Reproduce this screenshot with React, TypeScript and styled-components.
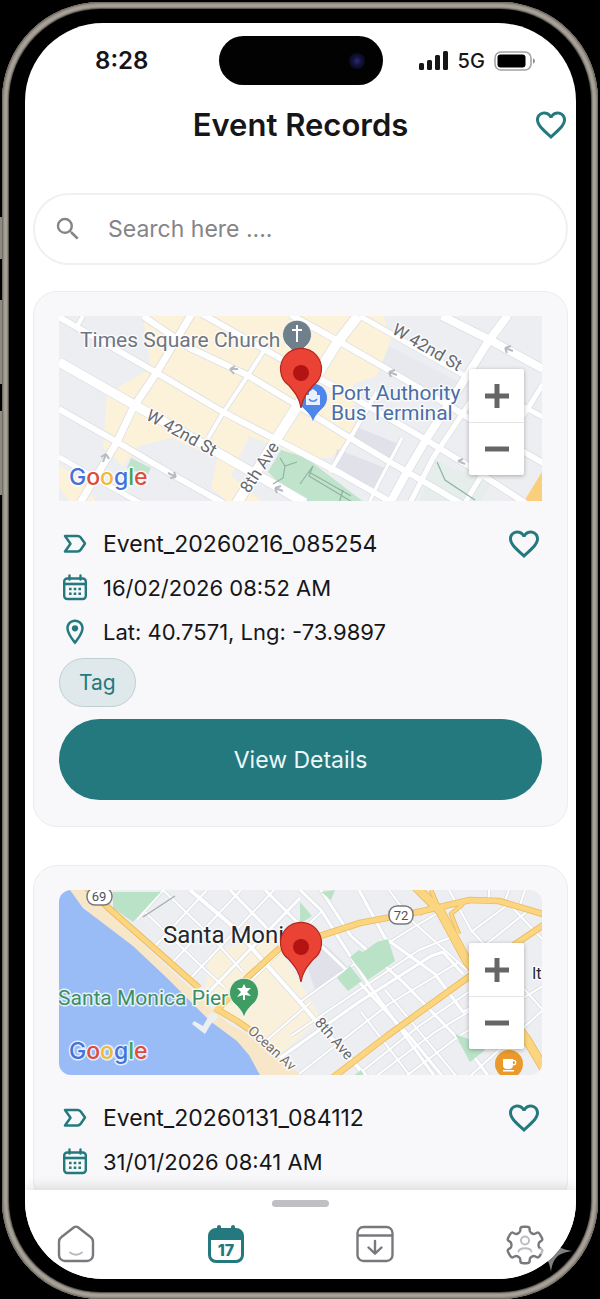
import React from 'react';
import styled, { createGlobalStyle, css } from 'styled-components';
import { MdFavoriteBorder, MdOutlineLocationOn, MdSearch } from 'react-icons/md';

const colors = {
  teal: '#24797e',
  text: '#161618',
  muted: '#858587',
  card: '#f8f8fa',
  line: '#ebecee',
  icon: '#77797d',
};

const GlobalStyle = createGlobalStyle`
  *,
  *::before,
  *::after {
    box-sizing: border-box;
  }

  body {
    margin: 0;
    background-color: #000;
    font-family: Inter, 'Liberation Sans', sans-serif;
    color: ${colors.text};
  }

  button,
  input {
    font-family: inherit;
  }

  button {
    padding: 0;
    border: 0;
    background: none;
    cursor: pointer;
  }
`;

const Stage = styled.div`
  height: 100vh;
  overflow: hidden;
  padding: 2px 2px 0;
`;

const Frame = styled.div`
  position: relative;
  height: calc(100vh - 2px);
  padding: 7px;
  border-radius: 98px;
  background-color: #aaa49b;
  box-shadow:
    inset 0 0 0 1px #726d66,
    inset 0 0 2px 2px #88827a;
`;

const SideKey = styled.div<{ $top: number; $height: number }>`
  position: absolute;
  top: ${props => props.$top}px;
  left: -2px;
  width: 2px;
  height: ${props => props.$height}px;
  background-color: #8f8a80;
`;

const Bezel = styled.div`
  height: 100%;
  padding: 14px 15px 13px 16px;
  border-radius: 92px;
  background-color: #000;
  box-shadow: 0 0 2px 1px #3b3833;
`;

const Screen = styled.div`
  display: flex;
  flex-direction: column;
  height: 100%;
  overflow: hidden;
  border-radius: 78px;
  background-color: #fff;
`;

const StatusBar = styled.div`
  flex: none;
  display: grid;
  grid-template-columns: 1fr 164px 1fr;
  align-items: center;
  justify-items: center;
  height: 75px;
`;

const Time = styled.span`
  font-size: 24px;
  font-weight: 600;
`;

const Island = styled.div`
  display: flex;
  align-items: center;
  justify-content: flex-end;
  width: 100%;
  height: 49px;
  padding-right: 18px;
  border-radius: 25px;
  background-color: #020203;
`;

const Lens = styled.div`
  width: 16px;
  height: 16px;
  border-radius: 50%;
  background: radial-gradient(circle, #2a2a78 0, #12123a 40%, #030308 100%);
`;

const Signals = styled.div`
  display: flex;
  align-items: center;
  gap: 9px;
  padding-right: 3px;
  font-size: 20px;
  font-weight: 500;
`;

const Header = styled.header`
  flex: none;
  display: grid;
  grid-template-columns: 1fr auto 1fr;
  align-items: center;
  height: 53px;
  padding: 0 7px;
`;

const Title = styled.h1`
  grid-column: 2;
  margin: 0;
  font-size: 31px;
  font-weight: 600;
  line-height: 40px;
`;

const HeartButton = styled.button`
  display: flex;
  justify-self: end;
  margin-left: auto;
  color: ${colors.teal};

  svg {
    width: 36px;
    height: 36px;
  }
`;

const SearchBox = styled.label`
  flex: none;
  display: flex;
  align-items: center;
  gap: 25px;
  height: 72px;
  margin: 42px 8px 26px;
  padding: 0 18px;
  border: 2px solid #f0f0f1;
  border-radius: 36px;
  color: ${colors.muted};

  svg {
    flex: none;
    width: 30px;
    height: 30px;
  }
`;

const SearchInput = styled.input`
  flex: 1;
  min-width: 0;
  padding: 0;
  border: 0;
  outline: 0;
  background: none;
  font-size: 23px;
  color: ${colors.text};

  &::placeholder {
    color: ${colors.muted};
    opacity: 1;
  }
`;

const List = styled.main`
  flex: 1;
  min-height: 0;
  display: flex;
  flex-direction: column;
  gap: 38px;
  overflow: hidden;
  padding: 0 8px;
`;

const Card = styled.article`
  flex: none;
  padding: 24px 25px 26px;
  border: 1px solid ${colors.line};
  border-radius: 24px;
  background-color: ${colors.card};
`;

const MapFrame = styled.div<{ $rounded?: boolean }>`
  position: relative;
  height: 185px;
  overflow: hidden;
  ${props =>
    props.$rounded === true &&
    css`
      border-radius: 12px;
    `}
`;

const MapDrawing = styled.svg`
  display: block;
  width: 100%;
  height: 100%;
  font-family: Roboto, sans-serif;
`;

const ZoomControl = styled.div`
  position: absolute;
  top: 53px;
  right: 18px;
  width: 55px;
  border-radius: 2px;
  background-color: #fff;
  box-shadow: 0 1px 4px rgba(0, 0, 0, 0.3);
`;

const ZoomButton = styled.button`
  display: flex;
  align-items: center;
  justify-content: center;
  width: 100%;
  height: 53px;
  color: #666;

  & + & {
    border-top: 1px solid #e4e4e4;
  }
`;

const Details = styled.div`
  display: flex;
  flex-direction: column;
  gap: 14px;
  margin-top: 28px;
`;

const Row = styled.div`
  display: flex;
  align-items: center;
  gap: 12px;
  height: 30px;
  font-size: 22px;
  line-height: 30px;

  > svg {
    flex: none;
    width: 32px;
    height: 30px;
    color: ${colors.teal};
  }
`;

const Name = styled.h2`
  margin: 0;
  font-size: 23px;
  font-weight: 400;
`;

const Tag = styled.span`
  display: inline-flex;
  align-items: center;
  height: 49px;
  margin: 11px 0 12px;
  padding: 0 19px;
  border: 1px solid #bfcfd1;
  border-radius: 25px;
  background-color: #dfe9eb;
  font-size: 21px;
  color: ${colors.teal};
`;

const ViewButton = styled.button`
  display: block;
  width: 100%;
  height: 81px;
  border-radius: 41px;
  background-color: ${colors.teal};
  font-size: 23px;
  color: #eef8f8;
`;

const NavBar = styled.nav`
  position: relative;
  flex: none;
  height: 89px;
  padding: 10px 29px 0;
  background-color: #fff;
  box-shadow: 0 -3px 12px rgba(0, 0, 0, 0.12);
`;

const Handle = styled.div`
  width: 57px;
  height: 7px;
  margin: 0 auto 18px;
  border-radius: 4px;
  background-color: #c0c0c4;
`;

const NavItems = styled.div`
  display: flex;
  justify-content: space-between;
`;

const NavButton = styled.button<{ $active?: boolean }>`
  display: flex;
  justify-content: center;
  width: 44px;
  color: ${props => (props.$active ? colors.teal : colors.icon)};
`;

const Sparkle = styled.svg`
  position: absolute;
  right: 26px;
  bottom: 27px;
  width: 42px;
  height: 42px;
`;

const SignalIcon = () => (
  <svg width="30" height="19" viewBox="0 0 30 19" fill="currentColor">
    <rect x="0" y="12" width="5" height="7" rx="1.5" />
    <rect x="8" y="9" width="5" height="10" rx="1.5" />
    <rect x="16" y="4" width="5" height="15" rx="1.5" />
    <rect x="24" y="0" width="5" height="19" rx="1.5" />
  </svg>
);

const BatteryIcon = () => (
  <svg width="43" height="20" viewBox="0 0 43 20">
    <rect x="1" y="1" width="36" height="18" rx="6" fill="none" stroke="#a3a3a5" strokeWidth="1.6" />
    <rect x="3.5" y="3.5" width="28" height="13" rx="3" fill="#000" />
    <path d="M39 7.5c2.6.6 2.6 4.4 0 5z" fill="#8d8d90" />
  </svg>
);

const NameIcon = () => (
  <svg viewBox="0 0 32 30" fill="none" stroke="currentColor" strokeWidth="2.5" strokeLinejoin="round">
    <path d="M6 7H18.500Q20.500 7 21.700 8.500L26 14.500L21.700 20.800Q20.500 22.500 18.500 22.500H6L11.500 14.800Z" />
  </svg>
);

const DateIcon = () => (
  <svg viewBox="0 0 32 30" fill="none" stroke="currentColor" strokeWidth="2.4">
    <rect x="5.200" y="5.500" width="21.600" height="20.500" rx="3" />
    <path d="M5 11h22" strokeWidth="2.6" />
    <path d="M10.500 2.500v4M21.500 2.500v4" strokeLinecap="round" />
    <path d="M10 16h2.600M14.700 16h2.600M19.400 16h2.600M10 20.800h2.600M14.700 20.800h2.600M19.400 20.800h2.600" />
  </svg>
);

const HomeIcon = () => (
  <svg width="38" height="38" viewBox="0 0 38 38" fill="none" stroke="currentColor" strokeWidth="2.4">
    <path d="M17 2.300a3.500 3.500 0 0 1 4 0L33.500 12a6 6 0 0 1 2.500 5V30a6 6 0 0 1-6 6H8a6 6 0 0 1-6-6V17a6 6 0 0 1 2.500-5z" />
    <path d="M13 27.500c3.500 3 8.500 3 12 0" stroke="#b9babd" strokeWidth="1.800" strokeLinecap="round" />
  </svg>
);

const CalendarIcon = () => (
  <svg width="38" height="38" viewBox="0 0 38 38" fill="none" stroke="currentColor">
    <rect x="2.500" y="4.500" width="33" height="32" rx="6.500" strokeWidth="3" />
    <path d="M2 15V11a7 7 0 0 1 7-7h20a7 7 0 0 1 7 7v4z" fill="currentColor" stroke="none" />
    <path d="M12 2v4M26 2v4" strokeWidth="4" strokeLinecap="round" />
    <text x="19" y="31" fill="currentColor" stroke="none" fontSize="16" fontWeight="800" textAnchor="middle">
      17
    </text>
  </svg>
);

const ArchiveIcon = () => (
  <svg
    width="38"
    height="38"
    viewBox="0 0 38 38"
    fill="none"
    stroke="currentColor"
    strokeWidth="2.4"
    strokeLinecap="round"
    strokeLinejoin="round"
  >
    <rect x="1.500" y="2" width="35" height="34" rx="6" />
    <path d="M2 10.500h34M19 16v12.500M12.500 22.500l6.500 6.200 6.500-6.200" />
  </svg>
);

// Six teeth whose corners are rounded off over a third of each side.
const gearPath = (center: number, outer: number, inner: number): string => {
  const corners = [0, 1, 2, 3, 4, 5].flatMap(tooth =>
    [
      [-20, inner],
      [-14, outer],
      [14, outer],
      [20, inner],
    ].map(([offset, radius]) => {
      const angle = ((tooth * 60 - 90 + offset) * Math.PI) / 180;
      return [center + radius * Math.cos(angle), center + radius * Math.sin(angle)];
    }),
  );
  const between = (a: number[], b: number[], t: number) =>
    `${a[0] + (b[0] - a[0]) * t} ${a[1] + (b[1] - a[1]) * t}`;
  return corners
    .map((corner, i) => {
      const previous = corners[(i + corners.length - 1) % corners.length];
      const next = corners[(i + 1) % corners.length];
      return `${i === 0 ? 'M' : 'L'}${between(corner, previous, 0.35)}Q${corner[0]} ${corner[1]} ${between(corner, next, 0.35)}`;
    })
    .join('')
    .concat('Z');
};

const SettingsIcon = () => (
  <svg width="40" height="40" viewBox="0 0 40 40" fill="none" stroke="currentColor" strokeWidth="2.4">
    <path d={gearPath(20, 18.8, 13.8)} />
    <circle cx="20" cy="15.500" r="4" stroke="#bcbdc0" strokeWidth="2" />
    <path d="M13.500 26.500c1-4.500 12-4.500 13 0" stroke="#bcbdc0" strokeWidth="2" strokeLinecap="round" />
  </svg>
);

const RedPin = () => (
  <g>
    <path
      d="M242 92c-1.500-10-6-15.500-12-22.500a20.500 20.500 0 1 1 24 0c-6 7-10.500 12.500-12 22.500z"
      fill="#ea4335"
      stroke="#b5271d"
      strokeWidth="1.200"
    />
    <circle cx="242" cy="57" r="8" fill="#b31412" />
  </g>
);

const PlacePin: React.FC<{ x: number; y: number; fill: string; children: React.ReactNode }> = ({
  x,
  y,
  fill,
  children,
}) => (
  <g transform={`translate(${x} ${y})`}>
    <path d="M0 26c-1.500-6-4-9-8.500-13.500a14.500 14.500 0 1 1 17 0C4 17 1.500 20 0 26z" fill={fill} stroke="#fff" strokeWidth="0.800" />
    {children}
  </g>
);

const Label: React.FC<
  React.SVGProps<SVGTextElement> & { size: number; turn?: number; left: number; base: number }
> = ({ size, turn = 0, left, base, children, ...rest }) => (
  <text
    transform={`translate(${left} ${base}) rotate(${turn})`}
    fontSize={size}
    stroke="#fff"
    strokeWidth="3"
    strokeOpacity="0.75"
    strokeLinejoin="round"
    paintOrder="stroke"
    {...rest}
  >
    {children}
  </text>
);

const GoogleMark = () => (
  <Label left={10} base={169} size={23} fontFamily="Inter, sans-serif" fontWeight="500">
    <tspan fill="#4272db">G</tspan>
    <tspan fill="#e04a3f">o</tspan>
    <tspan fill="#f0b93a">o</tspan>
    <tspan fill="#4272db">g</tspan>
    <tspan fill="#3fa35b">l</tspan>
    <tspan fill="#e04a3f">e</tspan>
  </Label>
);

const Roads: React.FC<{ paths: [string, number][]; color?: string; edge?: string }> = ({
  paths,
  color = '#fff',
  edge = '#dcdfe4',
}) => (
  <g fill="none" strokeLinejoin="round">
    {paths.map(([d, width]) => (
      <path key={`e${d}`} d={d} stroke={edge} strokeWidth={width + 1.6} />
    ))}
    {paths.map(([d, width]) => (
      <path key={d} d={d} stroke={color} strokeWidth={width} />
    ))}
  </g>
);

const midtownRoads: [string, number][] = [
  ['M0 46L79 91L198 159L246 187', 9],
  ['M0 93L58 126L114 159L164 187', 6],
  ['M0 1L98 57L164 96L241 136L281 157L334 187', 6],
  ['M84 0L131 32L188 59L238 89L291 122L331 146L374 171L401 187', 6],
  ['M143 -2L224 44L278 72L364 122L408 149L454 179L466 187', 6],
  ['M232 -1L281 26L321 49L394 92L441 122L484 147', 6],
  ['M301 0L408 61L484 101', 5],
  ['M383 0L431 24L484 53', 8],
  ['M0 141L31 159L81 187', 5],
  ['M132 -1L98 56L74 92L58 126L21 187', 7],
  ['M208 30L188 61L164 97L149 122', 4],
  ['M299 0L278 27L241 86L218 122L178 187', 10],
  ['M449 -1L429 26L404 66L368 122L348 156L331 187', 8],
  ['M318 76L293 119L271 156', 4],
  ['M412 85L374 142L351 187', 5],
  ['M484 68L471 89L421 162L406 187', 5],
  ['M343 122L318 170L310 187', 3],
  ['M24 0L17 12', 4],
];

const MidtownMap = () => (
  <MapDrawing viewBox="0 0 483 185" preserveAspectRatio="xMidYMid slice" role="img" aria-label="Map of Times Square">
    <rect width="483" height="185" fill="#eceef1" />
    <path d="M84 0H325L332 24L318 60L294 68L296 118L272 142L241 142L222 132L190 120L172 160L205 187H170L152 172L158 142L112 122L80 130L64 150L44 132L48 78L92 52Z" fill="#fcf1d9" />
    <path d="M0 150L20 160L38 187H12L0 172Z" fill="#fcf1d9" />
    <path d="M278 133L326 152L311 178L273 154ZM300 112L340 128L328 146L290 126Z" fill="#e0e1e9" />
    <path d="M330 30L400 66L388 84L322 50Z" fill="#e8e9ee" />
    <path d="M222 134L246 141L306 187H240L209 156ZM72 142L92 152L88 160L68 152Z" fill="#c0e3cb" />
    <path d="M376 144L400 154L432 168L420 187H360Z" fill="#e6eeeb" />
    <path d="M484 154V187H464Z" fill="#fbce7b" />
    <Roads paths={midtownRoads} />
    <path
      d="M221 142L226 150L238 146M226 150L224 162L214 168M241 168L254 150L250 160L295 187M250 156L292 180M284 174L280 187M378 146L386 164L416 184"
      fill="none"
      stroke="#8fb3a0"
      strokeWidth="1.200"
    />
    <path
      d="M171 53l8 0M171 53l5-3M171 53l4 5M330 56l8 3M330 56l6-2M330 56l2 5M446 32l8 3M446 32l6-2M446 32l2 5M117 161l-8-4M117 161l-6 1M117 161l-2-5M47 138l-3 8M47 138l-5 3M47 138l3 5M216 172l8 3M216 172l6-2M216 172l2 5M399 145l7 3M399 145l5-2"
      fill="none"
      stroke="#b7bac0"
      strokeWidth="2"
    />
    <Label left={86} base={103} size={17} turn={29} fill="#66696e">
      W 42nd St
    </Label>
    <Label left={332} base={17} size={17} turn={30} fill="#66696e">
      W 42nd St
    </Label>
    <Label left={190} base={178} size={17} turn={-57} fill="#66696e">
      8th Ave
    </Label>
    <Label left={21} base={31} size={21} fill="#6e7682">
      Times Square Church
    </Label>
    <Label left={272} base={84} size={21} fill="#4a6ea8">
      Port Authority
    </Label>
    <Label left={272} base={104} size={21} fill="#4a6ea8">
      Bus Terminal
    </Label>
    <PlacePin x={238} y={18} fill="#6f7f8c">
      <path d="M0-9V8M-5-4H5" stroke="#fff" strokeWidth="2" />
    </PlacePin>
    <PlacePin x={254} y={81} fill="#4f86ec">
      <path d="M-7-2H7V8H-7ZM-4-2V-5L0-8L4-5V-2" fill="#e9f1ff" />
      <path d="M-4 2C-2 5 2 5 4 2" fill="none" stroke="#4f86ec" strokeWidth="1.500" />
    </PlacePin>
    <RedPin />
    <GoogleMark />
  </MapDrawing>
);

const coastStreets: [string, number][] = [
  ['M104 0L78 30', 2],
  ['M148 0L96 56', 2],
  ['M182 0L112 74', 2],
  ['M215 0L128 92', 2],
  ['M241 8L146 106', 3],
  ['M262 22L170 112', 2],
  ['M86 22L140 74L166 98', 2],
  ['M104 0L150 44L184 82', 2],
  ['M131 0L171 34L241 112L256 130L308 187', 4],
  ['M171 0L204 34L236 70', 3],
  ['M206 0L252 46L300 92L352 148L384 187', 3],
  ['M241 0L262 20L309 94L376 187', 3],
  ['M262 0L292 46L344 92L410 160L430 187', 3],
  ['M300 0L326 48L376 84L404 122L412 118', 3],
  ['M330 0L352 30L408 80', 2],
  ['M241 112L280 84L350 40L394 14', 2],
  ['M232 146L300 100L360 60L400 44', 2],
  ['M208 150L252 112', 2],
  ['M218 170L300 112L372 66L384 62L404 84', 3],
  ['M236 187L330 114L400 72', 2],
  ['M296 187L360 136L430 88', 2],
  ['M316 187L376 142L450 98', 2],
  ['M346 187L400 146L484 96', 2],
  ['M410 187L484 120', 2],
  ['M302 122L352 187', 2],
  ['M326 100L398 187', 2],
  ['M390 0L412 40L484 120', 2],
  ['M412 42L450 14L484 50', 2],
  ['M430 0V14M450 0L444 16M466 0L460 18', 2],
  ['M420 60L470 20', 2],
];

const coastHighways: [string, number][] = [
  ['M26 -4L54 22L140 98', 5],
  ['M156 118L178 131L194 142', 5],
  ['M160 118L188 88L221 58', 5],
  ['M258 47L301 33L364 21L411 10L440 11L484 24', 5],
  ['M356 -4L381 21L408 71L468 150L486 180', 8],
  ['M272 189L328 146L404 91L458 53L486 34', 5],
  ['M372 0L378 14L360 24', 3],
  ['M404 14L392 24L400 44', 3],
];

const SantaMonicaMap = () => (
  <MapDrawing viewBox="0 0 483 185" preserveAspectRatio="xMidYMid slice" role="img" aria-label="Map of Santa Monica">
    <rect width="483" height="185" fill="#eceef1" />
    <path d="M150 64L212 44L262 128L222 164L146 104Z" fill="#faf1dc" />
    <path d="M238 44L268 56L290 78L256 100Z" fill="#e1e1ea" />
    <Roads paths={coastStreets} />
    <path d="M84 27L116 6" fill="none" stroke="#9fb0a9" strokeWidth="1.200" />
    <path d="M54 2H102L74 32L54 18ZM291 67L300 60L304 62L318 52L329 49L336 71L309 90ZM278 88L291 76L303 91L289 101ZM241 12L253 26L241 34ZM262 2L276 0L272 10ZM396 144L412 150L426 160L411 172ZM296 185L302 180L306 187Z" fill="#b9e2c6" />
    <path d="M8 0H30L60 32L140 106L170 134L196 148L244 187H192Z" fill="#f8e6c8" />
    <path d="M0 0H11L24 18L74 56L108 88L151 131L178 151L190 165L202 187H0Z" fill="#9abcf6" />
    <path d="M133 134L146 144L152 134L160 126L152 122L144 136L135 131Z" fill="#eceef1" />
    <Roads paths={coastHighways} color="#fbd57f" edge="#ecb95c" />
    <g fill="#fff" stroke="#77797c" strokeWidth="1.500" fontSize="13" textAnchor="middle">
      <rect x="28" y="-2" width="25" height="17" rx="8" />
      <rect x="330" y="16" width="24" height="18" rx="8" />
      <g fill="#505256" stroke="none">
        <text x="40" y="11">
          69
        </text>
        <text x="342" y="30">
          72
        </text>
      </g>
    </g>
    <Label left={104} base={53} size={24} fill="#26282b">
      Santa Moni
    </Label>
    <Label left={-1} base={115} size={21} fill="#3d8f63">
      Santa Monica Pier
    </Label>
    <Label left={188} base={142} size={14} turn={42} fill="#75706a">
      Ocean Av
    </Label>
    <Label left={255} base={133} size={15} turn={49} fill="#66696e">
      8th Ave
    </Label>
    <Label left={473} base={89} size={16} fill="#26282b">
      It
    </Label>
    <PlacePin x={185} y={102} fill="#3f9c62">
      <path d="M0-8L2-4L7-4L3 0L7 4L1 3L1 8H-1L-1 3L-7 5L-3 0L-7-4L-2-4Z" fill="#fff" />
    </PlacePin>
    <g transform="translate(450 174)">
      <circle r="14" fill="#ea9a2c" />
      <path d="M-6-5H4V1a4 4 0 0 1-4 4H-2a4 4 0 0 1-4-4ZM-6 6H5V7.500H-6Z" fill="#fff" />
      <circle cx="4.500" cy="-1.500" r="2.200" fill="none" stroke="#fff" strokeWidth="1.300" />
    </g>
    <RedPin />
    <GoogleMark />
  </MapDrawing>
);

interface EventRecord {
  name: string;
  date: string;
  location: string;
  map: React.ReactNode;
  rounded?: boolean;
}

const records: EventRecord[] = [
  {
    name: 'Event_20260216_085254',
    date: '16/02/2026 08:52 AM',
    location: 'Lat: 40.7571, Lng: -73.9897',
    map: <MidtownMap />,
  },
  {
    name: 'Event_20260131_084112',
    date: '31/01/2026 08:41 AM',
    location: '',
    map: <SantaMonicaMap />,
    rounded: true,
  },
];

const EventCard: React.FC<{ record: EventRecord }> = ({ record }) => (
  <Card>
    <MapFrame $rounded={record.rounded}>
      {record.map}
      <ZoomControl>
        <ZoomButton aria-label="Zoom in">
          <svg width="26" height="26" viewBox="0 0 26 26" stroke="currentColor" strokeWidth="5">
            <path d="M13 1v24M1 13h24" />
          </svg>
        </ZoomButton>
        <ZoomButton aria-label="Zoom out">
          <svg width="26" height="26" viewBox="0 0 26 26" stroke="currentColor" strokeWidth="5">
            <path d="M1 13h24" />
          </svg>
        </ZoomButton>
      </ZoomControl>
    </MapFrame>
    <Details>
      <Row>
        <NameIcon />
        <Name>{record.name}</Name>
        <HeartButton aria-label="Add to favourites">
          <MdFavoriteBorder />
        </HeartButton>
      </Row>
      <Row>
        <DateIcon />
        <time>{record.date}</time>
      </Row>
      {record.location && (
        <Row>
          <MdOutlineLocationOn />
          <span>{record.location}</span>
        </Row>
      )}
    </Details>
    {record.location ? (
      <>
        <Tag>Tag</Tag>
        <ViewButton>View Details</ViewButton>
      </>
    ) : null}
  </Card>
);

const App = (): React.ReactElement => (
  <>
    <GlobalStyle />
    <Stage>
      <Frame>
        <SideKey $top={215} $height={42} />
        <SideKey $top={298} $height={84} />
        <SideKey $top={409} $height={84} />
        <Bezel>
          <Screen>
            <StatusBar>
              <Time>8:28</Time>
              <Island>
                <Lens />
              </Island>
              <Signals>
                <SignalIcon />
                5G
                <BatteryIcon />
              </Signals>
            </StatusBar>
            <Header>
              <Title>Event Records</Title>
              <HeartButton aria-label="Favourites">
                <MdFavoriteBorder />
              </HeartButton>
            </Header>
            <SearchBox>
              <MdSearch />
              <SearchInput type="text" aria-label="Search" placeholder="Search here ...." />
            </SearchBox>
            <List>
              {records.map(record => (
                <EventCard key={record.name} record={record} />
              ))}
            </List>
            <NavBar>
              <Handle />
              <NavItems>
                <NavButton aria-label="Home">
                  <HomeIcon />
                </NavButton>
                <NavButton $active aria-label="Events">
                  <CalendarIcon />
                </NavButton>
                <NavButton aria-label="Downloads">
                  <ArchiveIcon />
                </NavButton>
                <NavButton aria-label="Settings">
                  <SettingsIcon />
                </NavButton>
              </NavItems>
            </NavBar>
          </Screen>
        </Bezel>
        <Sparkle viewBox="-21 -21 42 42">
          <path d="M0-21C2-7 7-2 21 0C7 2 2 7 0 21C-2 7-7 2-21 0C-7-2-2-7 0-21Z" fill="#fff" fillOpacity="0.5" />
        </Sparkle>
      </Frame>
    </Stage>
  </>
);

export default App;
